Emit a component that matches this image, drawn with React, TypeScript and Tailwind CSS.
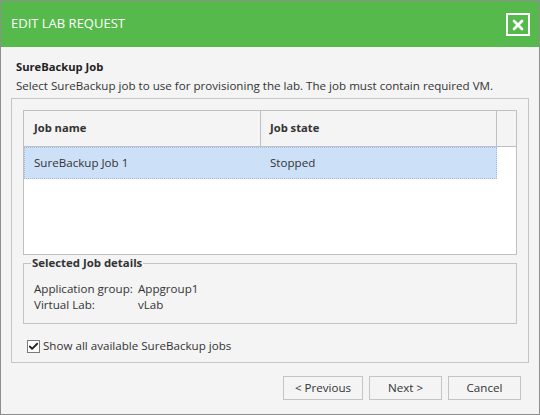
import { Check, X } from 'lucide-react';

const font = { fontFamily: '"Open Sans", "Noto Sans", sans-serif' };

const App = () => {
  return (
    <div
      className="w-[540px] h-[415px] flex flex-col border border-[#8e8e8e] bg-[#f4f4f4] text-[11.6px] text-[#333]"
      style={font}
    >
      {/* Title bar */}
      <div className="h-[46px] shrink-0 bg-[#55b94b] flex items-center justify-between pl-[10px] pr-[9px]">
        <h1 className="text-[13px] text-white">EDIT LAB REQUEST</h1>
        <button className="w-[24px] h-[23px] border-2 border-white flex items-center justify-center mt-[1px]">
          <X className="w-[16px] h-[16px] text-white" strokeWidth={4} />
        </button>
      </div>

      <div className="flex-1 flex flex-col px-[10px]">
        <div className="pl-[5px] pt-[11px] pb-[3px]">
          <div className="font-bold text-[11.2px] text-[#222] leading-[18px]">SureBackup Job</div>
          <div className="leading-[18px] mt-[1px]">
            Select SureBackup job to use for provisioning the lab. The job must contain required VM.
          </div>
        </div>

        {/* Main panel */}
        <div className="border border-[#c4c4c4] w-[518px] px-[11px] pt-[11px] pb-[8px]">
          {/* Table */}
          <div className="h-[145px] border border-[#c0c0c0] bg-white flex flex-col">
            <div className="h-[36px] flex bg-[#f4f4f4] border-b border-[#c0c0c0] font-bold text-[11.2px] text-[#333]">
              <div className="w-[237px] border-r border-[#c0c0c0] flex items-center pl-[10px]">Job name</div>
              <div className="w-[236px] border-r border-[#c0c0c0] flex items-center pl-[9px]">Job state</div>
              <div className="flex-1" />
            </div>
            <div className="w-[473px] h-[32px] flex items-center bg-[#cce0f8] border border-dotted border-[#9fbde4]">
              <div className="w-[236px] pl-[9px]">SureBackup Job 1</div>
              <div className="pl-[9px]">Stopped</div>
            </div>
          </div>

          {/* Selected job details */}
          <fieldset className="border border-[#c4c4c4] h-[69px] px-[10px]">
            <legend className="font-bold text-[11.4px] px-[1px] ml-[-3px] leading-[16px]">Selected Job details</legend>
            <div className="grid grid-cols-[104px_1fr] leading-[16px] pt-[10px]">
              <span>Application group:</span>
              <span>Appgroup1</span>
              <span>Virtual Lab:</span>
              <span>vLab</span>
            </div>
          </fieldset>

          <label className="flex items-center gap-[3px] mt-[14px] ml-[4px]">
            <span className="w-[13px] h-[13px] border border-[#7a7a7a] bg-white flex items-center justify-center">
              <Check className="w-[11px] h-[11px] text-[#222]" strokeWidth={4} />
            </span>
            <span className="leading-[16px]">Show all available SureBackup jobs</span>
          </label>
        </div>

        {/* Buttons */}
        <div className="flex justify-end gap-[6px] mt-[13px] pr-[8px]">
          <button className="w-[80px] h-[24px] border border-[#c4c4c4] bg-[#f4f4f4]">&lt; Previous</button>
          <button className="w-[73px] h-[24px] border border-[#c4c4c4] bg-[#f4f4f4]">Next &gt;</button>
          <button className="w-[73px] h-[24px] border border-[#c4c4c4] bg-[#f4f4f4]">Cancel</button>
        </div>
      </div>
    </div>
  );
};

export default App;
